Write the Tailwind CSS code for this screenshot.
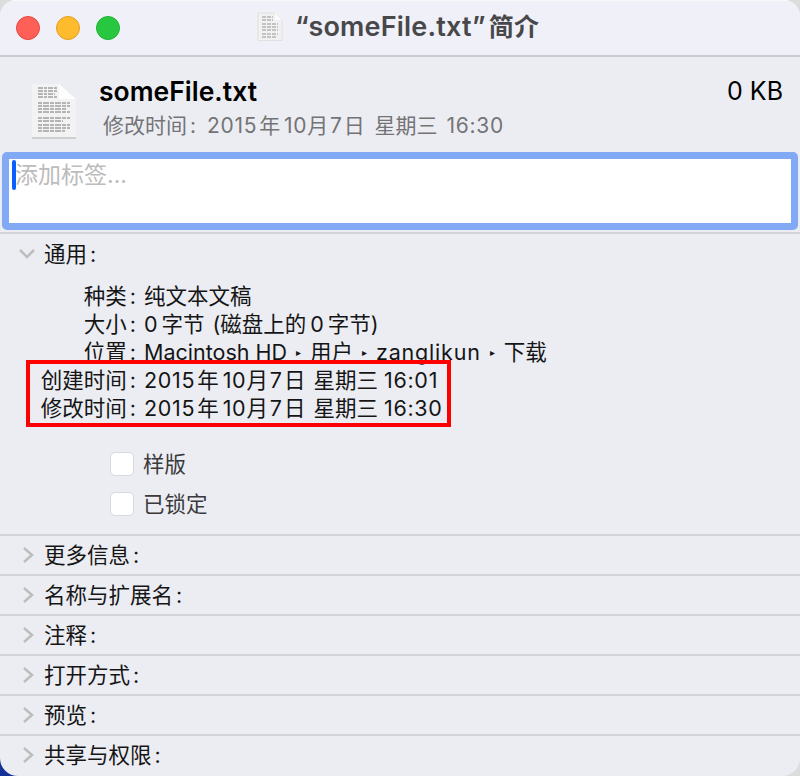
<!DOCTYPE html>
<html lang="zh">
  <head>
    <meta charset="UTF-8" />
    <title>someFile.txt 简介</title>
    <script src="https://cdn.jsdelivr.net/npm/@tailwindcss/browser@4"></script>
  </head>
  <body class="w-[800px] h-[776px] overflow-hidden relative bg-[#dcdcdc] font-['Inter','Noto_Sans_CJK_SC',sans-serif]">
    <!-- desktop showing through the bottom left corner -->
    <span class="absolute left-0 bottom-0 w-6 h-6 bg-[#16309a]"></span>
    <div class="w-[800px] h-[776px] overflow-hidden rounded-t-[16px] rounded-b-[18px] bg-[#ecedf3] text-[21.500px] text-[#151515] relative">
      <!-- title bar -->
      <div class="h-[57px] bg-[#eff0f8] border-b-2 border-[#cbcbce] shadow-[inset_0_1px_0_#f8f8f8] flex items-center relative">
        <div class="flex gap-4 pl-4">
          <span class="w-6 h-6 rounded-full bg-[#fe5f57] border border-[#e4493f]"></span>
          <span class="w-6 h-6 rounded-full bg-[#febb2e] border border-[#e09f1f]"></span>
          <span class="w-6 h-6 rounded-full bg-[#27c840] border border-[#1fb133]"></span>
        </div>
        <div class="absolute left-[257px] top-[12px] flex items-center">
          <svg class="blur-[0.4px]" width="26" height="30" viewBox="0 0 26 30">
            <path d="M1 1H18L25 8V28.500H1Z" fill="#f1f1f1" stroke="#e0e0e0" />
            <path d="M18 1V8H25Z" fill="#fcfcfc" />
            <path d="M5 5H16M5 8H16M5 12H21M5 15H21M5 18H21M5 22H21M5 25H19" stroke="#b4b4b4" stroke-width="1.500" stroke-dasharray="4 1" />
          </svg>
          <span class="ml-[12px] text-[27px] leading-[30px] font-semibold tracking-[0.200px] text-[#48484a] whitespace-nowrap">“someFile.txt”<span class="ml-[3px] text-[25px]">简介</span></span>
        </div>
      </div>

      <!-- file header -->
      <div class="h-[95px] flex relative">
        <svg class="ml-[31px] mt-[26px] blur-[0.4px]" width="46" height="56" viewBox="0 0 46 56">
          <path d="M1 1H28L45 16V55H1Z" fill="#f3f3f3" />
          <path d="M1 54H45V56H1Z" fill="#cfcfcf" />
          <path d="M28 1V16H45Z" fill="#fdfdfd" />
          <path d="M7 5H26M7 8H26M7 11H24M7 14H26" stroke="#777" stroke-width="1" stroke-dasharray="5 1 3 1" />
          <path d="M7 20H39M7 23H39M7 26H36M7 29H39M7 35H39M7 38H32M7 42H39M7 45H39M7 48H34" stroke="#777" stroke-width="1" stroke-dasharray="4 1 6 1" />
        </svg>
        <div class="ml-[22px] pt-[17px]">
          <div class="text-[26.500px] font-semibold text-black leading-[34px]">someFile.txt</div>
          <div class="ml-[4px] mt-[3px] text-[21px] leading-[30px] text-[#747476]">修改时间<span class="ml-[3px] mr-[11px]">:</span><span class="tracking-[0.700px]">2015</span>&#8202;年&thinsp;<span class="tracking-[0.700px]">10</span>月&#8202;7&#8202;日&thinsp; 星期三 <span class="ml-[3px] tracking-[0.700px]">16:30</span></div>
        </div>
        <div class="absolute right-[17px] top-[17px] text-[25px] leading-[34px] text-black">0 KB</div>
      </div>

      <!-- tags field -->
      <div class="mx-[2px] h-[78px] rounded-[5px] border-[7px] border-[#81a9f4] bg-white relative">
        <span class="absolute left-[3px] top-[1px] w-1 h-[30px] rounded-full bg-[#0a60ff]"></span>
        <span class="absolute left-[6px] top-[1px] text-[23px] leading-[30px] text-[#bcbcbc]">添加标签...</span>
      </div>

      <!-- general section -->
      <div class="h-[302px] mt-[2px] border-t-2 border-[#d3d4d8]">
        <div class="h-[40px] flex items-center">
          <svg class="ml-[18px]" width="18" height="12" viewBox="0 0 18 12"><path d="M2 2L9 9L16 2" fill="none" stroke="#bdbdbd" stroke-width="2.500" /></svg>
          <span class="ml-[8px]">通用<span class="ml-[3px]">:</span></span>
        </div>
        <div class="mt-[8px] leading-[28px] grid grid-cols-[136px_1fr] gap-x-[8px]">
          <div class="text-right">种类<span class="ml-[3px]">:</span></div><div>纯文本文稿</div>
          <div class="text-right">大小<span class="ml-[3px]">:</span></div><div>0&thinsp;字节&#8202; (磁盘上的&thinsp;0&thinsp;字节)</div>
          <div class="text-right">位置<span class="ml-[3px]">:</span></div><div class="flex items-center gap-[9px]">Macintosh HD <i class="text-[10px] not-italic">▸</i> 用户 <i class="text-[10px] not-italic">▸</i> <span class="tracking-[0.800px]">zanglikun</span> <i class="text-[10px] not-italic">▸</i> 下载</div>
          <div class="text-right">创建时间<span class="ml-[3px]">:</span></div><div><span class="tracking-[0.700px]">2015</span>&#8202;年&thinsp;<span class="tracking-[0.700px]">10</span>月&#8202;7&#8202;日&#8202; 星期三 <span class="tracking-[0.700px]">16:01</span></div>
          <div class="text-right">修改时间<span class="ml-[3px]">:</span></div><div><span class="tracking-[0.700px]">2015</span>&#8202;年&thinsp;<span class="tracking-[0.700px]">10</span>月&#8202;7&#8202;日&#8202; 星期三 <span class="tracking-[0.700px]">16:30</span></div>
        </div>
        <div class="ml-[110px] mt-[30px] flex flex-col gap-[16px] text-[#3a3a3c]">
          <label class="flex items-center gap-[9px] h-6"><span class="w-6 h-6 rounded-[5px] bg-white border border-[#d8d8d8]"></span>样版</label>
          <label class="flex items-center gap-[9px] h-6"><span class="w-6 h-6 rounded-[5px] bg-white border border-[#d8d8d8]"></span>已锁定</label>
        </div>
      </div>

      <!-- collapsed sections -->
      <div class="flex flex-col">
        <div class="h-[40px] border-t-2 border-[#d3d4d8] flex items-center"><svg class="ml-[22px]" width="12" height="18" viewBox="0 0 12 18"><path d="M2 2L10 9L2 16" fill="none" stroke="#bdbdbd" stroke-width="2.500" /></svg><span class="ml-[10px]">更多信息<span class="ml-[3px]">:</span></span></div>
        <div class="h-[40px] border-t-2 border-[#d3d4d8] flex items-center"><svg class="ml-[22px]" width="12" height="18" viewBox="0 0 12 18"><path d="M2 2L10 9L2 16" fill="none" stroke="#bdbdbd" stroke-width="2.500" /></svg><span class="ml-[10px]">名称与扩展名<span class="ml-[3px]">:</span></span></div>
        <div class="h-[40px] border-t-2 border-[#d3d4d8] flex items-center"><svg class="ml-[22px]" width="12" height="18" viewBox="0 0 12 18"><path d="M2 2L10 9L2 16" fill="none" stroke="#bdbdbd" stroke-width="2.500" /></svg><span class="ml-[10px]">注释<span class="ml-[3px]">:</span></span></div>
        <div class="h-[40px] border-t-2 border-[#d3d4d8] flex items-center"><svg class="ml-[22px]" width="12" height="18" viewBox="0 0 12 18"><path d="M2 2L10 9L2 16" fill="none" stroke="#bdbdbd" stroke-width="2.500" /></svg><span class="ml-[10px]">打开方式<span class="ml-[3px]">:</span></span></div>
        <div class="h-[40px] border-t-2 border-[#d3d4d8] flex items-center"><svg class="ml-[22px]" width="12" height="18" viewBox="0 0 12 18"><path d="M2 2L10 9L2 16" fill="none" stroke="#bdbdbd" stroke-width="2.500" /></svg><span class="ml-[10px]">预览<span class="ml-[3px]">:</span></span></div>
        <div class="h-[40px] border-t-2 border-[#d3d4d8] flex items-center"><svg class="ml-[22px]" width="12" height="18" viewBox="0 0 12 18"><path d="M2 2L10 9L2 16" fill="none" stroke="#bdbdbd" stroke-width="2.500" /></svg><span class="ml-[10px]">共享与权限<span class="ml-[3px]">:</span></span></div>
      </div>

      <!-- red annotation box -->
      <div class="absolute left-[26px] top-[360px] w-[425px] h-[67px] border-[4px] border-[#fe0000]"></div>
    </div>
  </body>
</html>
